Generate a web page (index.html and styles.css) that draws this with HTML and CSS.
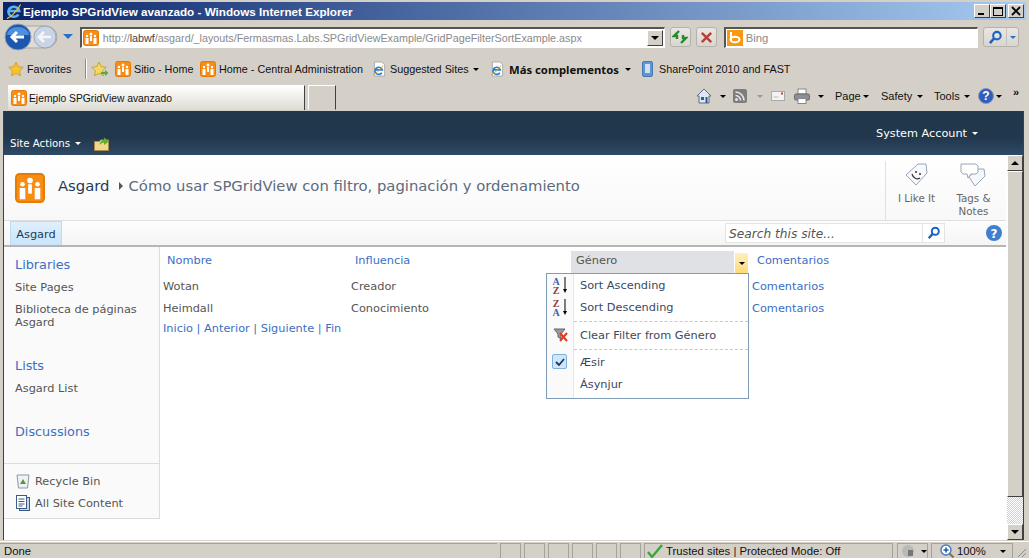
FILE: index.html
```html
<!DOCTYPE html>
<html>
<head>
  <title>Ejemplo SPGridView avanzado</title>
  <link rel="stylesheet" href="styles.css">
</head>
<body>
  <svg class="defs" width="0" height="0">
    <symbol id="sp" viewBox="0 0 16 16">
      <rect x=".5" y=".5" width="15" height="15" rx="2" fill="#f98d13" stroke="#e57a05"/>
      <circle cx="8" cy="4" r="1.5" fill="#fff"/><rect x="7" y="6" width="2" height="5" fill="#fff"/>
      <circle cx="4" cy="6" r="1.2" fill="#fff"/><rect x="2.500" y="8" width="3" height="6" fill="#fff"/>
      <circle cx="12" cy="6" r="1.2" fill="#fff"/><rect x="10.500" y="8" width="3" height="6" fill="#fff"/>
    </symbol>
    <symbol id="iepage" viewBox="0 0 16 16">
      <path d="M2.500 .5h8l3 3v12h-11z" fill="#fff" stroke="#a9a9a9"/>
      <path d="M10.500 12a4 3.800 0 1 1 .5-3H3.500" fill="none" stroke="#2a7fd0" stroke-width="1.800"/>
      <path d="M1 14c3-1 9-6 11-10" fill="none" stroke="#e8b020" stroke-width="1"/>
    </symbol>
    <symbol id="lens" viewBox="0 0 16 16">
      <circle cx="9.500" cy="6" r="4" fill="none" stroke="#1a62c4" stroke-width="2.200"/>
      <path d="M6.500 9l-4.500 5" stroke="#1a62c4" stroke-width="2.600"/>
    </symbol>
  </svg>

  <div class="window">
    <div class="titlebar">
      <svg class="title-logo" viewBox="0 0 16 16" width="16" height="16">
        <path d="M12.500 11.500a5.500 5 0 1 1 .8-3.500H3" fill="none" stroke="#5fb2f2" stroke-width="2.600"/>
        <path d="M1 15.500c3-1 11-8 13.500-14" fill="none" stroke="#f0c040" stroke-width="1.200"/>
      </svg>
      <span class="title-text">Ejemplo SPGridView avanzado - Windows Internet Explorer</span>
      <div class="winbtns">
        <span class="winbtn"><i class="win-min"></i></span>
        <span class="winbtn"><i class="win-max"></i></span>
        <span class="winbtn win-x">
          <svg viewBox="0 0 10 10" width="10" height="10"><path d="M1 1l8 8M9 1l-8 8" stroke="#000" stroke-width="1.800"/></svg>
        </span>
      </div>
    </div>

    <div class="navbar">
      <div class="backfwd">
        <svg viewBox="0 0 60 30" width="60" height="30">
          <rect x="8" y="4" width="46" height="22" rx="11" fill="#dfdcd6" stroke="#a9a7a2"/>
          <circle cx="42" cy="15" r="11" fill="#c9d5e6" stroke="#9ba6b6"/>
          <path d="M48 15H37M41 10l-5 5 5 5" fill="none" stroke="#f4f6fa" stroke-width="2.600"/>
          <circle cx="15" cy="15" r="13" fill="#1c56ae" stroke="#8ea0b8"/>
          <path d="M4 13a11 8 0 0 1 22 0z" fill="#4d8ede"/>
          <path d="M9 15h12M14 10l-5 5 5 5" fill="none" stroke="#fff" stroke-width="3"/>
        </svg>
        <span class="blue-arrow"></span>
      </div>
      <div class="address">
        <svg class="ico16" width="16" height="16"><use href="#sp"/></svg>
        <span class="url"><span class="url-dim">http://</span>labwf<span class="url-dim">/asgard/_layouts/Fermasmas.Labs.SPGridViewExample/GridPageFilterSortExample.aspx</span></span>
        <span class="combo-btn"><i class="arrow"></i></span>
      </div>
      <span class="toolbtn">
        <svg viewBox="0 0 16 16" width="16" height="16"><path d="M7 2L2 7h3v3M9 14l5-5h-3V6" fill="none" stroke="#2a8a2a" stroke-width="2.400"/></svg>
      </span>
      <span class="toolbtn">
        <svg viewBox="0 0 16 16" width="15" height="15"><path d="M3 3l10 10M13 3L3 13" stroke="#b3403a" stroke-width="2.600"/></svg>
      </span>
      <div class="searchbox">
        <svg viewBox="0 0 16 16" width="16" height="16" class="bing">
          <rect width="16" height="16" fill="#f59a12"/>
          <path d="M4 2v9" stroke="#fff" stroke-width="2"/>
          <ellipse cx="8" cy="9.500" rx="4.500" ry="2.800" fill="none" stroke="#fff" stroke-width="2"/>
        </svg>
        <span>Bing</span>
      </div>
      <span class="searchbtn">
        <span class="searchbtn-main"><svg width="15" height="15"><use href="#lens"/></svg></span>
        <span class="searchbtn-drop"><span class="blue-arrow small"></span></span>
      </span>
    </div>

    <div class="favbar">
      <svg class="fav-star" viewBox="0 0 16 16" width="16" height="16"><path d="M8 1l2.200 4.600 5 .7-3.600 3.500.9 5L8 12.400 3.500 14.800l.9-5L.8 6.300l5-.7z" fill="#f6c22f" stroke="#c98f14" stroke-width=".7"/></svg>
      <span class="fav-label">Favorites</span>
      <span class="fav-sep"></span>
      <svg class="fav-add" viewBox="0 0 18 16" width="18" height="16"><path d="M8 1l2.200 4.600 5 .7-3.600 3.500.9 5L8 12.400 3.500 14.800l.9-5L.8 6.300l5-.7z" fill="#f6d85f" stroke="#b89018" stroke-width=".7"/><path d="M10 11h4V9l3.500 3-3.500 3v-2h-4z" fill="#4caf3a"/></svg>
      <svg class="ico16" width="16" height="16"><use href="#sp"/></svg>
      <span class="fav-link w-sitio">Sitio - Home</span>
      <svg class="ico16" width="16" height="16"><use href="#sp"/></svg>
      <span class="fav-link w-home">Home - Central Administration</span>
      <svg class="ico15" width="15" height="16"><use href="#iepage"/></svg>
      <span class="fav-link w-sugg">Suggested Sites</span><i class="arrow small m-sugg"></i>
      <svg class="ico15" width="15" height="16"><use href="#iepage"/></svg>
      <b class="fav-link w-mas">Más complementos</b><i class="arrow small m-mas"></i>
      <svg class="fav-doc" viewBox="0 0 12 16" width="12" height="16"><rect x=".5" y=".5" width="10" height="15" rx="1.500" fill="#5f95d2" stroke="#4679b3"/><rect x="3" y="3" width="5" height="9" fill="#cfe0f3"/></svg>
      <span class="fav-link">SharePoint 2010 and FAST</span>
    </div>

    <div class="tabbar">
      <div class="tab">
        <svg class="ico16" width="16" height="16"><use href="#sp"/></svg>
        <span>Ejemplo SPGridView avanzado</span>
      </div>
      <div class="newtab"></div>
      <div class="cmds">
        <svg viewBox="0 0 16 16" width="16" height="16"><path d="M8 1L1 8h2v7h10V8h2z" fill="#dfe7f2" stroke="#5b6f8d"/><rect x="5" y="9" width="3" height="3" fill="#2f5d9a"/><rect x="9.500" y="9" width="2" height="6" fill="#2f5d9a"/></svg>
        <i class="arrow small cmd-a"></i>
        <svg class="cmd-b" viewBox="0 0 14 14" width="14" height="14"><rect width="14" height="14" rx="2" fill="#7d7d7d"/><circle cx="3.500" cy="10.500" r="1.500" fill="#e8e8e8"/><path d="M2.500 6.500a5 5 0 0 1 5 5M2.500 3a8.500 8.500 0 0 1 8.500 8.500" fill="none" stroke="#e8e8e8" stroke-width="1.600"/></svg>
        <i class="arrow small grey cmd-c"></i>
        <svg class="cmd-d" viewBox="0 0 14 10" width="14" height="10"><rect x=".5" y=".5" width="13" height="9" fill="#f3f3f3" stroke="#aaa"/><rect x="10" y="1.500" width="2" height="2" fill="#d03a3a"/><path d="M2.500 6h5" stroke="#bbb"/></svg>
        <svg class="cmd-e" viewBox="0 0 16 16" width="16" height="16"><rect x="4" y="1" width="8" height="5" fill="#fff" stroke="#888"/><rect x=".5" y="6" width="15" height="6" rx="1.500" fill="#8a9099" stroke="#666"/><rect x="4" y="10.500" width="8" height="5" fill="#fff" stroke="#888"/></svg>
        <i class="arrow small cmd-a"></i>
        <span class="cmd cmd-page">Page</span><i class="arrow small"></i>
        <span class="cmd cmd-safety">Safety</span><i class="arrow small"></i>
        <span class="cmd cmd-tools">Tools</span><i class="arrow small"></i>
        <svg class="cmd-help" viewBox="0 0 16 16" width="16" height="16"><circle cx="8" cy="8" r="7.500" fill="#2f5fbe" stroke="#8c96ac"/><text x="8" y="12" text-anchor="middle" class="help-q">?</text></svg>
        <i class="arrow small cmd-f"></i>
        <span class="cmd-more">»</span>
      </div>
    </div>

    <div class="page">
      <div class="ribbon">
        <div class="ribbon-left">
          <span>Site Actions</span><i class="arrow small white"></i>
          <svg class="ribbon-folder" viewBox="0 0 16 15" width="16" height="15"><path d="M.5 5.500h5l1-1.500h8v10.500H.5z" fill="#f1d78c" stroke="#a98a45"/><path d="M5 9c1-3 3-5 5-5V1.500l5 4-5 3.500V6.500C8 7 6 8 5 9z" fill="#5cb030"/></svg>
        </div>
        <div class="ribbon-right">
          <span>System Account</span><i class="arrow small white"></i>
        </div>
      </div>

      <div class="page-body">
        <div class="content">
          <div class="title-row">
            <svg class="site-logo" width="30" height="30"><use href="#sp"/></svg>
            <span class="site-name">Asgard</span>
            <i class="crumb-arrow"></i>
            <span class="page-name">Cómo usar SPGridView con filtro, paginación y ordenamiento</span>
            <div class="social">
              <div class="social-item">
                <svg viewBox="0 0 26 26" width="26" height="26"><path d="M2 13L14 2h8l1 9-11 12z" fill="#f7f9fc" stroke="#97a6b8"/><circle cx="12" cy="10" r="1" fill="#333"/><circle cx="16" cy="12" r="1" fill="#333"/><path d="M8 12c1 4 5 6 8 4" fill="none" stroke="#333" stroke-width="1.200"/></svg>
                <span>I Like It</span>
              </div>
              <div class="social-item">
                <svg viewBox="0 0 28 26" width="28" height="26"><path d="M9 15l6 9 10-10-1-7h-8z" fill="#f5f7fa" stroke="#97a6b8"/><path d="M1 2h15l2 2v6l-2 2h-5l-3 4-1-4H3l-2-2z" fill="#fff" stroke="#97a6b8"/></svg>
                <span>Tags &amp;<br>Notes</span>
              </div>
            </div>
          </div>

          <div class="topnav">
            <span class="topnav-tab">Asgard</span>
            <div class="site-search">
              <span class="site-search-input">Search this site...</span>
              <span class="site-search-btn"><svg width="14" height="14"><use href="#lens"/></svg></span>
            </div>
            <svg class="topnav-help" viewBox="0 0 16 16" width="16" height="16"><circle cx="8" cy="8" r="8" fill="#3f7fd0"/><text x="8" y="12.500" text-anchor="middle" class="help-q">?</text></svg>
          </div>

          <div class="columns">
            <div class="sidenav">
              <div class="sidenav-main">
                <a class="nav-head first">Libraries</a>
                <a class="nav-item">Site Pages</a>
                <a class="nav-item">Biblioteca de páginas Asgard</a>
                <a class="nav-head lists">Lists</a>
                <a class="nav-item">Asgard List</a>
                <a class="nav-head discuss">Discussions</a>
              </div>
              <div class="sidenav-foot">
                <a class="foot-item">
                  <svg viewBox="0 0 14 16" width="14" height="16"><path d="M1 2h12l-1.500 13h-9z" fill="#eef2f7" stroke="#8a98ab"/><path d="M7 6l3 5H4z" fill="#4e9a3c"/></svg>
                  Recycle Bin
                </a>
                <a class="foot-item">
                  <svg viewBox="0 0 14 16" width="14" height="16"><rect x="3.500" y="2.500" width="10" height="13" fill="#c9d6e8" stroke="#3c5a86"/><rect x=".5" y=".5" width="10" height="13" fill="#fff" stroke="#3c5a86"/><path d="M2.500 4h6M2.500 6.500h6M2.500 9h6M2.500 11h4" stroke="#3c5a86"/></svg>
                  All Site Content
                </a>
              </div>
            </div>

            <div class="main">
              <div class="grid">
                <a class="grid-head">Nombre</a>
                <a class="grid-head">Influencia</a>
                <div class="grid-head-active">
                  <span class="grid-head-name">Género</span>
                  <span class="grid-head-drop"><i class="arrow small"></i></span>
                </div>
                <a class="grid-head last">Comentarios</a>

                <span class="cell">Wotan</span>
                <span class="cell">Creador</span>
                <span class="cell"></span>
                <a class="cell link">Comentarios</a>

                <span class="cell">Heimdall</span>
                <span class="cell">Conocimiento</span>
                <span class="cell"></span>
                <a class="cell link">Comentarios</a>
              </div>
              <div class="pager">
                <a>Inicio</a> | <a>Anterior</a> | <a>Siguiente</a> | <a>Fin</a>
              </div>

              <div class="menu">
                <div class="menu-item">
                  <svg class="menu-ico" viewBox="0 0 18 20" width="18" height="20"><text x="5" y="9" text-anchor="middle" class="sort-a">A</text><text x="5" y="18" text-anchor="middle" class="sort-z">Z</text><path d="M14 1v13" stroke="#000"/><path d="M12 13h4l-2 4z" fill="#000"/></svg>
                  <span>Sort Ascending</span>
                </div>
                <div class="menu-item">
                  <svg class="menu-ico" viewBox="0 0 18 20" width="18" height="20"><text x="5" y="9" text-anchor="middle" class="sort-z">Z</text><text x="5" y="18" text-anchor="middle" class="sort-a">A</text><path d="M14 1v13" stroke="#000"/><path d="M12 13h4l-2 4z" fill="#000"/></svg>
                  <span>Sort Descending</span>
                </div>
                <div class="menu-sep"></div>
                <div class="menu-item">
                  <svg class="menu-ico filter-ico" viewBox="0 0 16 16" width="16" height="16"><path d="M1 2h11L8 7v5L5 10V7z" fill="#9a9a9a" stroke="#666"/><path d="M7 6l7 8M14 6l-7 8" stroke="#e23b20" stroke-width="2"/></svg>
                  <span>Clear Filter from Género</span>
                </div>
                <div class="menu-sep tight"></div>
                <div class="menu-item">
                  <span class="menu-check"><svg viewBox="0 0 10 8" width="10" height="8"><path d="M1 4l3 3 5-6" fill="none" stroke="#1d3a66" stroke-width="1.800"/></svg></span>
                  <span>Æsir</span>
                </div>
                <div class="menu-item">
                  <span>Ásynjur</span>
                </div>
              </div>
            </div>
          </div>
        </div>

        <div class="scrollbar">
          <span class="sb-btn"><i class="arrow up"></i></span>
          <span class="sb-thumb"></span>
          <span class="sb-track"></span>
          <span class="sb-btn"><i class="arrow"></i></span>
        </div>
      </div>
    </div>

    <div class="statusbar">
      <span class="status-done">Done</span>
      <span class="status-cell"></span>
      <span class="status-cell"></span>
      <span class="status-cell"></span>
      <span class="status-cell"></span>
      <span class="status-cell"></span>
      <span class="status-cell"></span>
      <span class="status-zone">
        <svg viewBox="0 0 16 14" width="16" height="14"><path d="M1 8l4 5L15 1" fill="none" stroke="#39a83a" stroke-width="2.400"/></svg>
        Trusted sites | Protected Mode: Off
      </span>
      <span class="status-shield">
        <svg viewBox="0 0 14 14" width="14" height="14"><circle cx="7" cy="7" r="6" fill="#b9b9b9"/><rect x="7" y="6" width="5" height="6" fill="#777"/></svg>
        <i class="arrow small"></i>
      </span>
      <span class="status-zoom">
        <svg viewBox="0 0 14 14" width="14" height="14"><circle cx="6" cy="6" r="5" fill="#fff" stroke="#3f7bc8" stroke-width="1.400"/><path d="M3.500 6h5M6 3.500v5" stroke="#1d5db0" stroke-width="1.600"/><path d="M9.500 9.500l4 4" stroke="#9a6a2a" stroke-width="2"/></svg>
        <span>100%</span>
        <i class="arrow small"></i>
      </span>
      <svg class="grip" viewBox="0 0 12 12" width="12" height="12"><path d="M11 3l-8 8M11 7l-4 4" stroke="#8d8b86"/></svg>
    </div>
  </div>
</body>
</html>
```

FILE: styles.css
```css
html, body {
  margin: 0;
  padding: 0;
}
body {
  width: 1029px;
  height: 558px;
  overflow: hidden;
  background-color: #d4d0c8;
  font-family: "Liberation Sans", sans-serif;
  font-size: 11px;
  color: #3b3b3b;
}
.defs {
  position: absolute;
}
svg {
  display: block;
  flex: none;
}
i {
  display: block;
  flex: none;
}

.window {
  height: 558px;
  display: flex;
  flex-direction: column;
}

/* little black dropdown arrows */
.arrow {
  width: 0;
  height: 0;
  border-left: 4px solid transparent;
  border-right: 4px solid transparent;
  border-top: 4px solid #000;
}
.arrow.up {
  border-top: 0;
  border-bottom: 4px solid #000;
}
.arrow.small {
  border-left-width: 3px;
  border-right-width: 3px;
  border-top-width: 3px;
}
.arrow.white {
  border-top-color: #fff;
}
.arrow.grey {
  border-top-color: #999;
}
.blue-arrow {
  width: 0;
  height: 0;
  border-left: 5px solid transparent;
  border-right: 5px solid transparent;
  border-top: 5px solid #2b6fc0;
}
.blue-arrow.small {
  border-left-width: 3px;
  border-right-width: 3px;
  border-top-width: 3px;
}

/* title bar */
.titlebar {
  height: 18px;
  margin: 2px 3px 0;
  padding: 0 2px 0 3px;
  display: flex;
  align-items: center;
  background: linear-gradient(to right, #0a246a, #a6caf0);
  color: #fff;
  font-weight: bold;
  font-size: 11.7px;
}
.title-logo {
  margin-right: 1px;
}
.title-text {
  flex: 1;
}
.winbtns {
  display: flex;
}
.winbtn {
  width: 16px;
  height: 14px;
  background-color: #d4d0c8;
  border: 1px solid;
  border-color: #fff #404040 #404040 #fff;
  box-sizing: border-box;
  display: flex;
  align-items: center;
  justify-content: center;
}
.win-x {
  margin-left: 2px;
}
.win-min {
  width: 6px;
  height: 2px;
  background-color: #000;
  margin-top: 6px;
  margin-left: -2px;
}
.win-max {
  width: 8px;
  height: 6px;
  border: 1px solid #000;
  border-top-width: 2px;
}

/* address row */
.navbar {
  height: 34px;
  padding: 0 10px 0 4px;
  display: flex;
  align-items: center;
  box-sizing: border-box;
}
.backfwd {
  width: 76px;
  margin: -1px 0 0 -1px;
  display: flex;
  align-items: center;
}
.address {
  width: 587px;
  height: 21px;
  box-sizing: border-box;
  margin-left: 1px;
  display: flex;
  align-items: center;
  background-color: #fff;
  border: 1px solid;
  border-color: #555 #fff #fff #555;
  border-width: 2px 1px 1px 2px;
  padding-left: 1px;
}
.url {
  flex: 1;
  padding-left: 4px;
  font-size: 10.75px;
  color: #444;
  white-space: nowrap;
  overflow: hidden;
}
.url-dim {
  color: #8a8a8a;
}
.combo-btn {
  width: 16px;
  height: 16px;
  margin-right: 1px;
  box-sizing: border-box;
  border: 1px solid;
  border-color: #fff #404040 #404040 #fff;
  background-color: #d4d0c8;
  display: flex;
  align-items: center;
  justify-content: center;
}
.toolbtn {
  width: 21px;
  height: 20px;
  margin-left: 5px;
  box-sizing: border-box;
  border: 1px solid #b5b3ae;
  border-radius: 3px;
  background: linear-gradient(#e9e7e3, #d9d6d0);
  display: flex;
  align-items: center;
  justify-content: center;
}
.searchbox {
  width: 255px;
  height: 21px;
  margin-left: 7px;
  box-sizing: border-box;
  display: flex;
  align-items: center;
  gap: 3px;
  background-color: #fff;
  border: 1px solid;
  border-color: #555 #fff #fff #555;
  border-width: 2px 1px 1px 2px;
  padding-left: 1px;
  font-size: 11.3px;
  color: #8a8a8a;
}
.searchbtn {
  margin-left: 5px;
  display: flex;
  height: 20px;
  box-sizing: border-box;
  border: 1px solid #b5b3ae;
  border-radius: 3px;
  background: linear-gradient(#e9e7e3, #d9d6d0);
}
.searchbtn-main {
  width: 22px;
  display: flex;
  align-items: center;
  justify-content: center;
  border-right: 1px solid #c4c2bd;
}
.searchbtn-drop {
  width: 11px;
  display: flex;
  align-items: center;
  justify-content: center;
}

/* favorites row */
.favbar {
  height: 28px;
  padding: 2px 0 0 8px;
  box-sizing: border-box;
  display: flex;
  align-items: center;
  font-size: 10.8px;
  color: #111;
  white-space: nowrap;
}
.fav-label {
  margin-left: 3px;
  width: 58px;
}
.fav-sep {
  width: 1px;
  height: 20px;
  background-color: #8d8b86;
  box-shadow: 1px 0 0 #fff;
}
.fav-add {
  margin-left: 5px;
}
.favbar .ico16 {
  margin-left: 6px;
}
.fav-link {
  margin-left: 3px;
}
.w-sitio {
  width: 57px;
}
.favbar .w-sitio + .ico16 {
  margin-left: 9px;
}
.w-home {
  width: 144px;
}
.ico15 {
  margin-left: 9px;
}
.w-sugg {
  width: 78px;
}
.m-sugg {
  margin-left: 5px;
}
.m-sugg + .ico15 {
  margin-left: 11px;
}
.w-mas {
  margin-left: 4px;
  width: 111px;
  font-family: "Noto Sans", sans-serif;
  font-size: 11.3px;
}
.m-mas {
  margin-left: 5px;
}
.fav-doc {
  margin-left: 11px;
}
.fav-doc + .fav-link {
  margin-left: 5px;
}

/* tabs and command bar */
.tabbar {
  height: 28px;
  padding: 2px 0 0 8px;
  box-sizing: border-box;
  display: flex;
  align-items: flex-end;
}
.tab {
  width: 297px;
  height: 25px;
  box-sizing: border-box;
  display: flex;
  align-items: center;
  gap: 2px;
  padding-left: 3px;
  background: linear-gradient(#fff, #dedbd4);
  border-right: 1px solid #404040;
  border-top: 1px solid #fff;
  font-size: 10.3px;
  color: #111;
  white-space: nowrap;
}
.newtab {
  width: 28px;
  height: 25px;
  margin-left: 3px;
  box-sizing: border-box;
  border: 1px solid;
  border-color: #fff #404040 #d4d0c8 #fff;
}
.cmds {
  flex: 1;
  height: 26px;
  margin-bottom: 1px;
  padding-left: 360px;
  display: flex;
  align-items: center;
  font-size: 11px;
  color: #111;
}
.cmd-a {
  margin-left: 8px;
}
.cmd-b {
  margin-left: 7px;
}
.cmd-c {
  margin-left: 10px;
}
.cmd-d {
  margin-left: 8px;
}
.cmd-e {
  margin-left: 9px;
}
.cmd-page {
  margin-left: 11px;
  width: 28px;
}
.cmd-safety {
  margin-left: 12px;
  width: 36px;
}
.cmd-tools {
  margin-left: 11px;
  width: 30px;
}
.cmd-help {
  margin-left: 8px;
}
.cmd-f {
  margin-left: 2px;
}
.cmd-more {
  margin-left: 11px;
  margin-top: -8px;
  font-weight: bold;
}
.help-q {
  font-weight: bold;
  font-size: 12px;
  fill: #fff;
}

/* SharePoint page area */
.page {
  flex: 1;
  min-height: 0;
  margin: 1px 5px 1px 3px;
  border-left: 1px solid #404040;
  border-right: 1px solid #404040;
  display: flex;
  flex-direction: column;
  background-color: #fff;
  font-family: "DejaVu Sans", sans-serif;
  font-size: 11.33px;
}
.ribbon {
  height: 44px;
  flex: none;
  box-sizing: border-box;
  display: flex;
  justify-content: space-between;
  padding: 0 45px 0 6px;
  background: linear-gradient(#21374c 60%, #2e4a66);
  color: #fff;
}
.ribbon-left {
  display: flex;
  align-items: center;
  gap: 5px;
  padding-top: 21px;
  height: 23px;
  font-size: 10.2px;
}
.ribbon-folder {
  margin-left: 8px;
}
.ribbon-right {
  display: flex;
  align-items: center;
  gap: 5px;
  height: 44px;
  font-size: 11.25px;
}
.page-body {
  flex: 1;
  min-height: 0;
  display: flex;
}
.content {
  flex: 1;
  min-width: 0;
  display: flex;
  flex-direction: column;
}
.title-row {
  height: 65px;
  flex: none;
  display: flex;
  align-items: center;
  box-sizing: border-box;
  padding-left: 11px;
  background: linear-gradient(#fff, #f8f8f8);
  white-space: nowrap;
}
.site-name {
  margin: 0 0 5px 13px;
  font-size: 14.8px;
  color: #1e3a5a;
}
.crumb-arrow {
  margin: 0 0 3px 9px;
  width: 0;
  height: 0;
  border-top: 4px solid transparent;
  border-bottom: 4px solid transparent;
  border-left: 4px solid #555;
}
.page-name {
  margin: 0 0 5px 6px;
  flex: 1;
  font-size: 14.8px;
  color: #5c6b7e;
}
.social {
  height: 59px;
  align-self: flex-end;
  border-left: 1px solid #e0e0e0;
  display: flex;
  padding: 0 4px 0 2px;
}
.social-item {
  width: 57px;
  display: flex;
  flex-direction: column;
  align-items: center;
  font-size: 10.3px;
  color: #666;
  text-align: center;
  line-height: 13px;
  margin-top: 1px;
  gap: 4px;
}
.topnav {
  height: 27px;
  flex: none;
  box-sizing: border-box;
  border-top: 1px solid #dfdfdf;
  border-bottom: 2px solid #b5b5b5;
  background: linear-gradient(#fdfdfd, #f5f5f5);
  display: flex;
  align-items: stretch;
  padding-left: 6px;
}
.topnav-tab {
  width: 52px;
  box-sizing: border-box;
  display: flex;
  align-items: center;
  justify-content: center;
  background: linear-gradient(#e0effb, #c9e4fa);
  border: 1px solid #bcdcf5;
  border-bottom: 0;
  color: #1e3a5a;
}
.site-search {
  margin-left: 663px;
  margin-top: 2px;
  height: 20px;
  width: 220px;
  display: flex;
  background-color: #fff;
  border: 1px solid #e3e3e3;
  box-sizing: border-box;
}
.site-search-input {
  flex: 1;
  padding: 3px 0 0 3px;
  font-style: italic;
  font-size: 12.2px;
  color: #555;
}
.site-search-btn {
  width: 21px;
  border-left: 1px solid #e3e3e3;
  display: flex;
  align-items: center;
  justify-content: center;
}
.topnav-help {
  margin: 4px 0 0 41px;
}
.columns {
  flex: 1;
  min-height: 0;
  display: flex;
}
.sidenav {
  width: 156px;
  height: 272px;
  box-sizing: border-box;
  flex: none;
  background-color: #fafafa;
  border-right: 1px solid #dbddde;
  border-bottom: 1px solid #dbddde;
  display: flex;
  flex-direction: column;
}
.sidenav-main {
  height: 217px;
  padding: 0 8px 0 11px;
  box-sizing: border-box;
  border-bottom: 1px solid #dbddde;
  flex: none;
}
.sidenav a {
  display: block;
}
.nav-head {
  font-size: 12.8px;
  color: #3a6fc4;
}
.nav-head.first {
  margin-top: 10px;
}
.nav-head.lists {
  margin-top: 29px;
}
.nav-head.discuss {
  margin-top: 29px;
}
.nav-item {
  margin-top: 9px;
  line-height: 13px;
  color: #555;
}
.sidenav-foot {
  padding: 6px 0 0 12px;
}
.sidenav .foot-item {
  height: 22px;
  display: flex;
  align-items: center;
  gap: 5px;
  color: #555;
}
.main {
  flex: 1;
  position: relative;
  padding: 4px 0 0 3px;
  min-width: 0;
}
.grid {
  display: grid;
  grid-template-columns: 188px 221px 180px 1fr;
  grid-auto-rows: 22px;
  align-items: center;
}
.grid-head {
  padding-left: 4px;
  color: #3a6fc4;
  margin-top: -4px;
}
.grid-head.last {
  padding-left: 5px;
}
.grid-head-active {
  margin: 0 4px 0 -1px;
  height: 22px;
  display: flex;
  color: #555;
  align-self: start;
}
.grid-head-name {
  flex: 1;
  background-color: #dfe1e5;
  padding: 2px 0 0 5px;
}
.grid-head-drop {
  width: 13px;
  margin: 2px 0 0 1px;
  display: flex;
  align-items: center;
  justify-content: center;
  background: linear-gradient(#fff0c0, #ffd97a);
}
.cell {
  color: #555;
}
.cell.link, .pager a, .pager {
  color: #3a6fc4;
}
.grid .cell {
  position: relative;
  top: 2px;
}
.pager {
  margin-top: 4px;
  line-height: 14px;
}

/* filter menu over the grid */
.menu {
  position: absolute;
  left: 386px;
  top: 26px;
  width: 203px;
  height: 126px;
  box-sizing: border-box;
  border: 1px solid #7f9db9;
  background: linear-gradient(to right, #fafafa 26px, #e5e5e5 26px, #e5e5e5 27px, #fff 27px);
}
.menu-item {
  height: 22px;
  display: flex;
  align-items: center;
  padding-left: 33px;
  position: relative;
  color: #3b4a5e;
}
.menu-ico {
  position: absolute;
  left: 4px;
  top: 2px;
}
.menu-ico.filter-ico {
  left: 6px;
  top: 3px;
}
.menu-check {
  position: absolute;
  left: 5px;
  top: 3px;
  width: 15px;
  height: 15px;
  box-sizing: border-box;
  border: 1px solid #7fb0de;
  border-radius: 2px;
  background-color: #cfe6f9;
  display: flex;
  align-items: center;
  justify-content: center;
}
.menu-sep {
  height: 0;
  margin: 3px 0 2px 27px;
  border-top: 1px dashed #c8c8c8;
}
.menu-sep.tight {
  margin-bottom: 1px;
}
.sort-a {
  font-family: "Liberation Serif", serif;
  font-weight: bold;
  font-size: 10px;
  fill: #3c63a8;
}
.sort-z {
  font-family: "Liberation Serif", serif;
  font-weight: bold;
  font-size: 10px;
  fill: #8a3a3a;
}

/* scrollbar */
.scrollbar {
  width: 17px;
  flex: none;
  display: flex;
  flex-direction: column;
  background-color: #fff;
  background-image: conic-gradient(#d4d0c8 25%, #fff 0 50%, #d4d0c8 0 75%, #fff 0);
  background-size: 2px 2px;
  border-left: 1px solid #fff;
  box-sizing: border-box;
}
.sb-btn, .sb-thumb {
  box-sizing: border-box;
  background-color: #d4d0c8;
  border: 1px solid;
  border-color: #fff #404040 #404040 #fff;
  display: flex;
  align-items: center;
  justify-content: center;
}
.sb-btn {
  height: 16px;
  flex: none;
}
.sb-thumb {
  height: 326px;
  flex: none;
}
.sb-track {
  flex: 1;
}

/* status bar */
.statusbar {
  height: 17px;
  flex: none;
  box-sizing: border-box;
  border-top: 1px solid #fff;
  padding-top: 1px;
  display: flex;
  align-items: flex-start;
  gap: 3px;
  font-size: 11.3px;
  line-height: 15px;
  color: #111;
  overflow: hidden;
  white-space: nowrap;
}
.status-done {
  width: 497px;
  padding-left: 4px;
  box-sizing: border-box;
  flex: none;
  border-top: 1px solid #a5a29b;
  height: 15px;
}
.status-cell {
  width: 21px;
  height: 15px;
  box-sizing: border-box;
  flex: none;
  border: 1px solid #a5a29b;
  border-bottom: 0;
}
.status-zone, .status-shield, .status-zoom {
  height: 15px;
  flex: none;
  box-sizing: border-box;
  border: 1px solid #a5a29b;
  border-bottom: 0;
  display: flex;
  align-items: center;
}
.status-zone {
  width: 249px;
  gap: 3px;
  padding-left: 2px;
}
.status-shield {
  width: 31px;
  gap: 6px;
  padding-left: 3px;
  margin-left: 1px;
}
.status-zoom {
  width: 82px;
  gap: 3px;
  padding-left: 8px;
}
.status-zoom i {
  margin-left: 11px;
}
.grip {
  margin: 3px 0 0 -1px;
}
```
